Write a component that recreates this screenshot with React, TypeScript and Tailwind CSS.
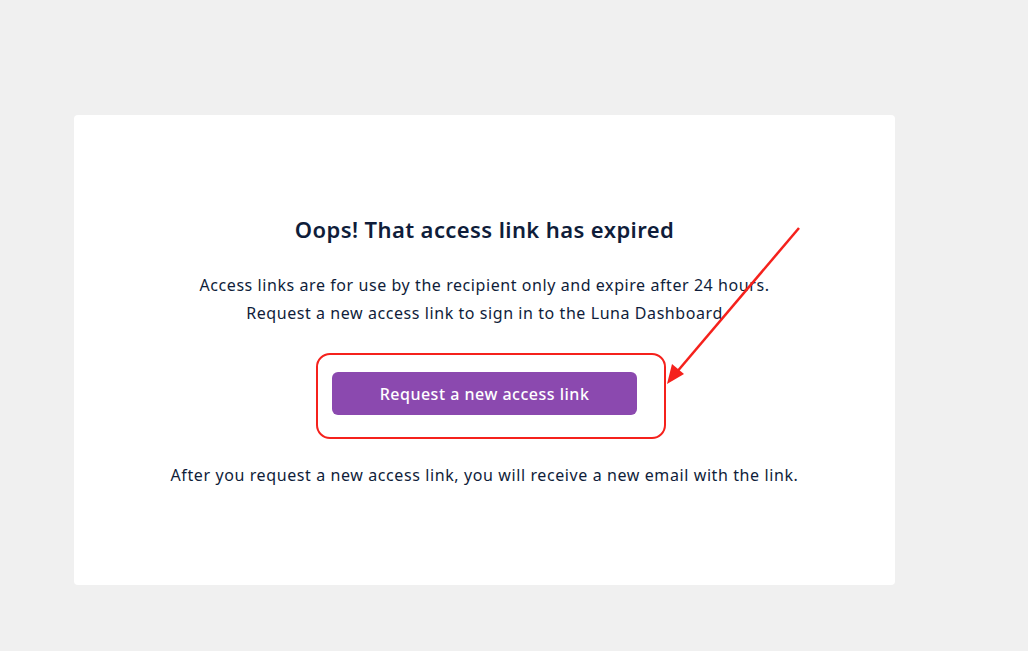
import React from "react";

export default function App() {
  return (
    <div className="relative min-h-[651px] w-[1028px] bg-[#f0f0f0] pt-[115px] pl-[74px]" style={{ fontFamily: "'Noto Sans', 'Open Sans', sans-serif" }}>
      <div className="flex h-[470px] w-[821px] flex-col items-center rounded-[4px] bg-white pt-[100px] text-[#0f1d3a]">
        <h1 className="text-[22px] font-semibold leading-[28px] tracking-[0.4px]">Oops! That access link has expired</h1>
        <div className="mt-[28px] text-center text-[16px] leading-[28px] tracking-[0.57px]">
          <p>Access links are for use by the recipient only and expire after 24 hours.</p>
          <p>Request a new access link to sign in to the Luna Dashboard</p>
        </div>
        <button className="mt-[45px] h-[43px] w-[305px] rounded-[6px] bg-[#8b49af] text-[16px] font-medium tracking-[0.5px] text-white">
          Request a new access link
        </button>
        <p className="mt-[46px] text-[16px] leading-[28px] tracking-[0.6px]">
          After you request a new access link, you will receive a new email with the link.
        </p>
      </div>
      <div className="pointer-events-none absolute left-[316px] top-[353px] h-[86px] w-[350px] rounded-[14px] border-2 border-[#f5211c]" />
      <svg className="pointer-events-none absolute left-0 top-0" width="1028" height="651">
        <line x1="799" y1="228" x2="676" y2="373" stroke="#f5211c" strokeWidth="2.5" />
        <polygon points="667,384 672,364 684,374" fill="#f5211c" />
      </svg>
    </div>
  );
}
